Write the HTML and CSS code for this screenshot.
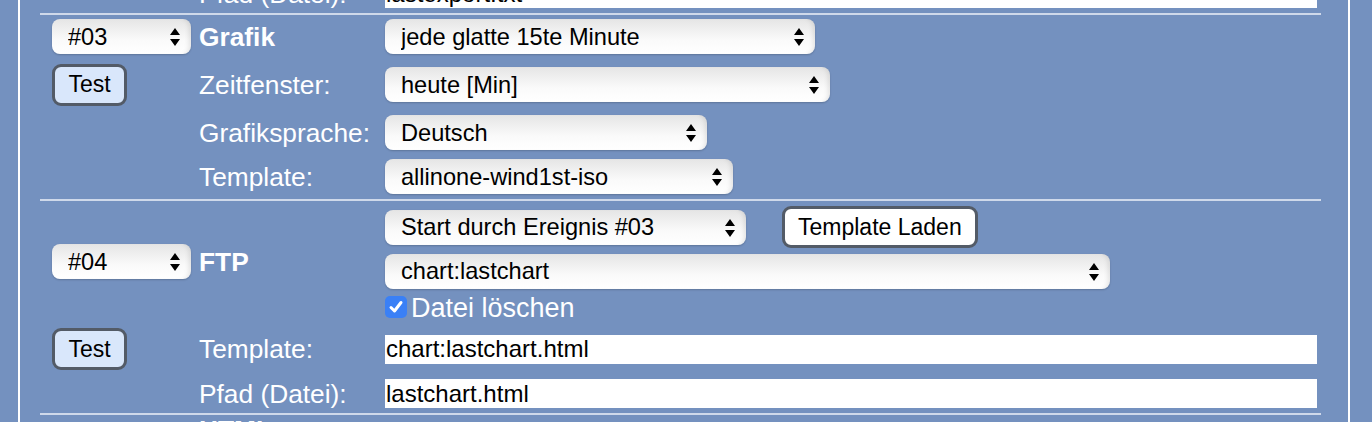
FILE: index.html
```html
<!DOCTYPE html>
<html lang="de">
<head>
  <meta charset="UTF-8">
  <title>Ereignisse</title>
  <link rel="stylesheet" href="styles.css">
</head>
<body>
<div class="frame">

  <!-- Ende von Ereignis #02 -->
  <div class="block tail">
    <span class="lbl c2">Pfad (Datei):</span>
    <input class="txt" type="text" value="lastexport.txt">
  </div>

  <!-- Ereignis #03 : Grafik -->
  <div class="block grafik">
    <div class="pick w-num">
      <select><option>#03</option></select>
      <svg class="updown" viewBox="0 0 10 18"><path d="M5 0L10 7H0Z M0 11H10L5 18Z"/></svg>
    </div>
    <span class="lbl head">Grafik</span>
    <div class="pick w-sched">
      <select><option>jede glatte 15te Minute</option></select>
      <svg class="updown" viewBox="0 0 10 18"><path d="M5 0L10 7H0Z M0 11H10L5 18Z"/></svg>
    </div>

    <button class="btn btn-test" type="button">Test</button>
    <span class="lbl">Zeitfenster:</span>
    <div class="pick w-range">
      <select><option>heute [Min]</option></select>
      <svg class="updown" viewBox="0 0 10 18"><path d="M5 0L10 7H0Z M0 11H10L5 18Z"/></svg>
    </div>

    <span class="lbl c2">Grafiksprache:</span>
    <div class="pick w-lang">
      <select><option>Deutsch</option></select>
      <svg class="updown" viewBox="0 0 10 18"><path d="M5 0L10 7H0Z M0 11H10L5 18Z"/></svg>
    </div>

    <span class="lbl c2">Template:</span>
    <div class="pick w-tpl">
      <select><option>allinone-wind1st-iso</option></select>
      <svg class="updown" viewBox="0 0 10 18"><path d="M5 0L10 7H0Z M0 11H10L5 18Z"/></svg>
    </div>
  </div>

  <!-- Ereignis #04 : FTP -->
  <div class="block ftp">
    <div class="pick w-num side">
      <select><option>#04</option></select>
      <svg class="updown" viewBox="0 0 10 18"><path d="M5 0L10 7H0Z M0 11H10L5 18Z"/></svg>
    </div>
    <span class="lbl head side-lbl">FTP</span>

    <div class="pair c3">
      <div class="pick w-start">
        <select><option>Start durch Ereignis #03</option></select>
        <svg class="updown" viewBox="0 0 10 18"><path d="M5 0L10 7H0Z M0 11H10L5 18Z"/></svg>
      </div>
      <button class="btn" type="button">Template Laden</button>
    </div>
    <div class="pick w-chart c3">
      <select><option>chart:lastchart</option></select>
      <svg class="updown" viewBox="0 0 10 18"><path d="M5 0L10 7H0Z M0 11H10L5 18Z"/></svg>
    </div>
    <label class="chk c3">
      <span class="box"><svg viewBox="0 0 22 22"><path d="M6 11.5L9.5 15L16 6.5"/></svg></span>Datei löschen
    </label>

    <button class="btn btn-test c1" type="button">Test</button>
    <span class="lbl">Template:</span>
    <input class="txt" type="text" value="chart:lastchart.html">

    <span class="lbl c2">Pfad (Datei):</span>
    <input class="txt" type="text" value="lastchart.html">
  </div>

  <!-- Ereignis #05 : HTML -->
  <div class="block html">
    <span class="lbl head c2">HTML</span>
  </div>

</div>
</body>
</html>
```

FILE: styles.css
```css
html, body {
  margin: 0;
  padding: 0;
  height: 100%;
  overflow: hidden;
}

body {
  background-color: #7491bf;
  font-family: "Liberation Sans", Arial, Helvetica, sans-serif;
}

.frame {
  margin-left: 18px;
  width: 1328px;
  min-height: 520px;
  border-left: 2px solid #fff;
  border-right: 2px solid #fff;
}

/* eine Zeile der Tabelle = ein Ereignis */
.block {
  margin-left: 20px;
  width: 1281px;
  box-sizing: border-box;
  padding: 0 4px 0 12px;
  border-top: 2px solid #cfd9ea;
  display: grid;
  grid-template-columns: 147px 186px 932px;
  align-items: center;
}

.tail {
  border-top: 0;
  margin-top: -25px;
  grid-template-rows: 37px;
  padding-bottom: 1px;
}

.grafik {
  grid-template-rows: 35px 43px 35px 35px;
  row-gap: 9px;
  padding-top: 4px;
  padding-bottom: 5px;
}

.ftp {
  grid-template-rows: 44px 36px 30px 44px 37px;
  row-gap: 4px;
  padding-top: 4px;
  padding-bottom: 1px;
}

.html {
  grid-template-rows: 60px;
  align-items: start;
}

.c1 { grid-column: 1; }
.c2 { grid-column: 2; }
.c3 { grid-column: 3; }

.side,
.side-lbl {
  grid-row: 1 / 4;
  margin-bottom: 5px;
}
.side { grid-column: 1; }
.side-lbl { grid-column: 2; }

.lbl {
  color: #fff;
  font-size: 26.3px;
  line-height: 30px;
  white-space: nowrap;
}

.head {
  font-weight: bold;
}

/* Auswahlfelder */
.pick {
  position: relative;
  justify-self: start;
  height: 35px;
}

.pick select {
  -webkit-appearance: none;
  appearance: none;
  width: 100%;
  height: 35px;
  margin: 0;
  padding: 0 30px 0 16px;
  border: 0;
  border-radius: 8px;
  outline: none;
  color: #000;
  font-family: inherit;
  font-size: 23.6px;
  background: linear-gradient(#e5e5e5, #fafafa 60%, #fff);
  box-shadow: 0 1px 2px rgba(0, 0, 0, .2), inset -5px 0 5px -3px rgba(0, 0, 0, .1);
}

.updown {
  position: absolute;
  right: 11px;
  top: 9px;
  width: 10px;
  height: 18px;
  fill: #000;
  pointer-events: none;
}

.w-num { width: 139px; }
.w-sched { width: 430px; }
.w-range { width: 445px; }
.w-lang { width: 322px; }
.w-tpl { width: 348px; }
.w-start { width: 361px; }
.w-chart { width: 725px; }

.pair {
  display: flex;
  align-items: center;
  gap: 36px;
}

/* Knöpfe */
.btn {
  justify-self: start;
  height: 42px;
  margin: 0;
  padding: 0 13px;
  border: 3px solid #535b67;
  border-radius: 9px;
  background-color: #fff;
  color: #000;
  font-family: inherit;
  font-size: 23px;
  cursor: pointer;
}

.btn-test {
  width: 75px;
  padding: 0;
  background-color: #d9e7fb;
}

/* Textfelder */
.txt {
  width: 932px;
  height: 29px;
  box-sizing: border-box;
  margin: 0;
  padding: 0 1px;
  border: 0;
  border-radius: 0;
  outline: none;
  background-color: #fff;
  color: #000;
  font-family: inherit;
  font-size: 24px;
}

.chk {
  display: flex;
  align-items: center;
  gap: 4px;
  color: #fff;
  font-size: 27px;
  line-height: 30px;
}

.chk .box {
  flex: none;
  width: 22px;
  height: 22px;
  margin: -2px 0 0 0;
  border-radius: 5px;
  background-color: #3a80f6;
}

.chk .box svg {
  display: block;
  width: 22px;
  height: 22px;
  fill: none;
  stroke: #fff;
  stroke-width: 3;
  stroke-linecap: round;
  stroke-linejoin: round;
}
```
